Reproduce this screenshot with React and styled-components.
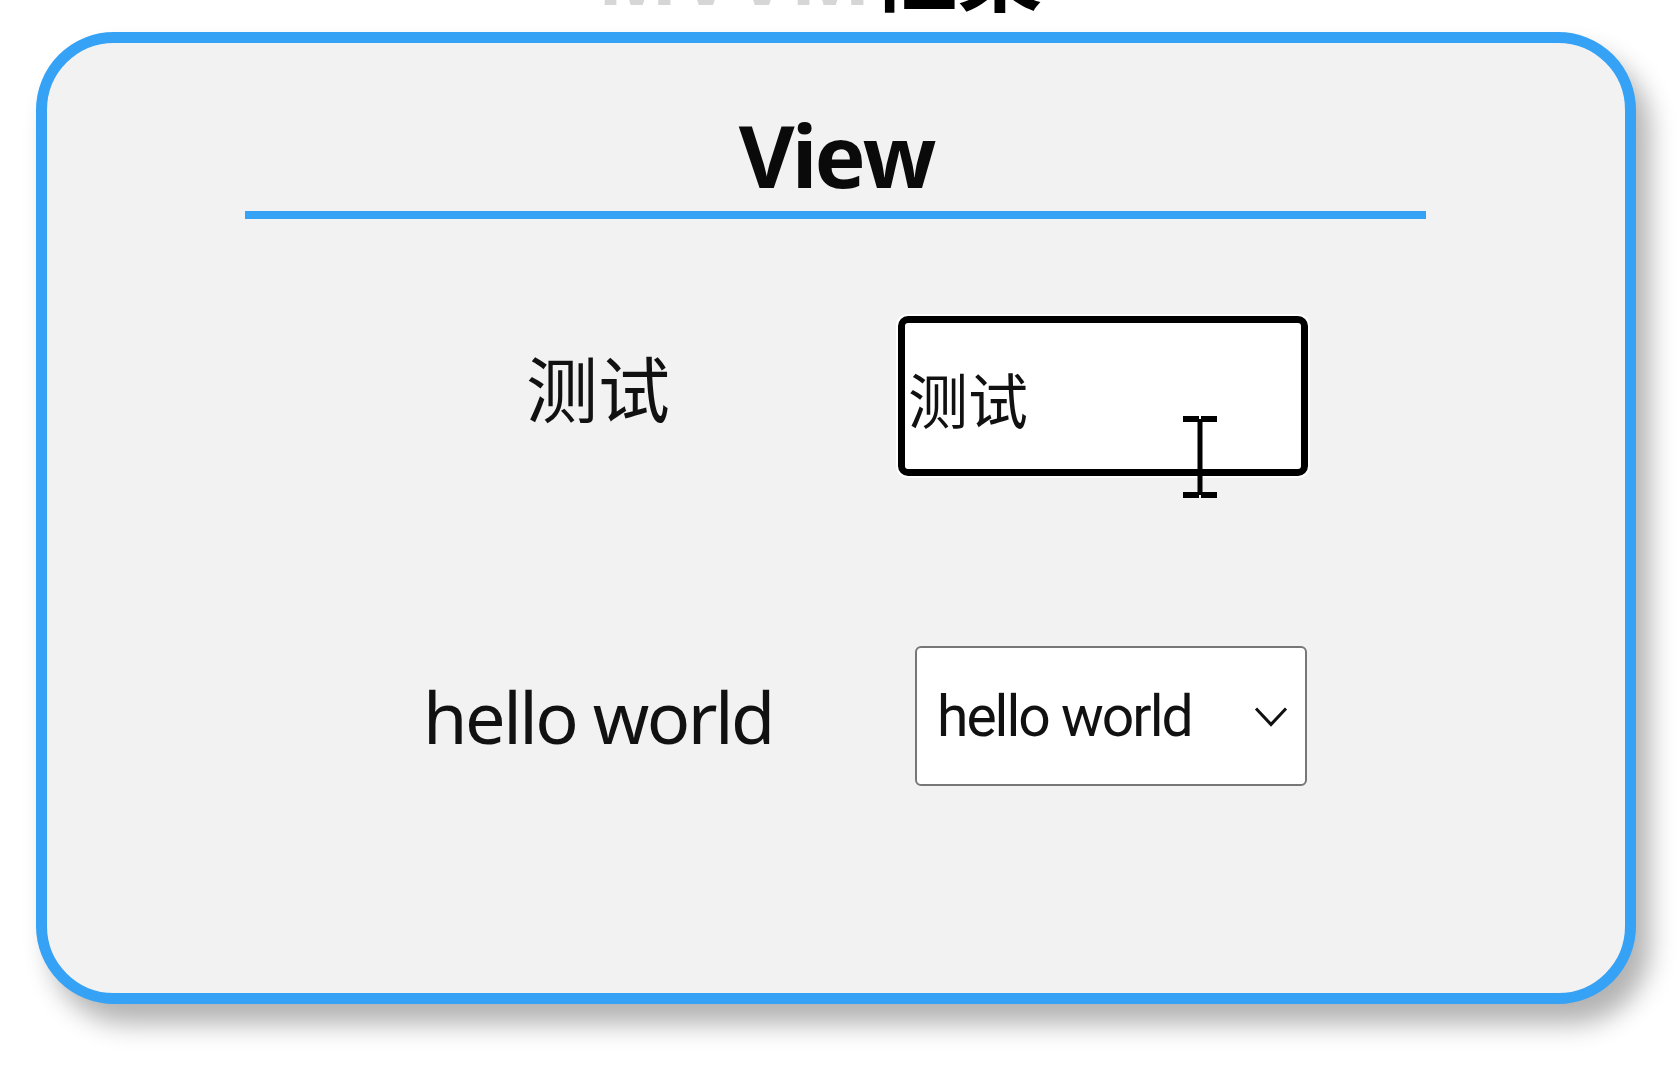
import styled, { createGlobalStyle } from "styled-components";

const GlobalStyle = createGlobalStyle`
  html, body {
    margin: 0;
    padding: 0;
    background: #ffffff;
  }
  body {
    font-family: "Noto Sans", "Noto Sans CJK SC", sans-serif;
    color: #111;
  }
  * {
    box-sizing: border-box;
  }
`;

export default function App() {
  return (
    <>
      <GlobalStyle />
      <Page>
        <TopBar>
          <PageTitle>
            <Faded>MVVM</Faded>框架
          </PageTitle>
        </TopBar>
        <Card>
          <Heading>View</Heading>
          <Divider />
          <Form>
            <Label $lift={14}>测试</Label>
            <Field>
              <TextInput defaultValue="测试" />
              <IBeam viewBox="0 0 36 82">
                <rect x="1" y="0" width="16" height="6" />
                <rect x="19" y="0" width="16" height="6" />
                <rect x="15.5" y="3" width="5" height="76" />
                <rect x="1" y="76" width="16" height="6" />
                <rect x="19" y="76" width="16" height="6" />
              </IBeam>
            </Field>
            <Label $tight>hello world</Label>
            <Field>
              <Select defaultValue="hello world">
                <option>hello world</option>
              </Select>
              <Chevron viewBox="0 0 34 22">
                <polyline points="2,3 17,19 32,3" />
              </Chevron>
            </Field>
          </Form>
        </Card>
      </Page>
    </>
  );
}

const Page = styled.div`
  width: 1680px;
  height: 1080px;
  padding-left: 36px;
  overflow: hidden;
`;

const TopBar = styled.div`
  width: 1600px;
  height: 32px;
  display: flex;
  justify-content: center;
  align-items: flex-end;
  padding-right: 32px;
  overflow: hidden;
`;

const PageTitle = styled.h1`
  margin: 0 0 17px;
  font-family: "Noto Sans", "Noto Sans CJK SC", sans-serif;
  font-size: 86px;
  font-weight: 700;
  line-height: 1;
  color: #000;
  white-space: nowrap;
`;

const Faded = styled.span`
  color: #d6d6d6;
`;

const Card = styled.section`
  width: 1600px;
  height: 972px;
  padding-top: 60px;
  border: 11px solid #35a2f6;
  border-radius: 78px;
  background: #f2f2f3;
  box-shadow: 14px 20px 26px rgba(0, 0, 0, 0.3);
  display: flex;
  flex-direction: column;
  align-items: center;
`;

const Heading = styled.h2`
  margin: 0;
  font-family: "Open Sans", "Noto Sans", sans-serif;
  font-size: 86px;
  font-weight: 700;
  letter-spacing: -3px;
  line-height: 1.2;
  color: #0a0a0a;
`;

const Divider = styled.div`
  width: 1181px;
  height: 8px;
  margin-top: 5px;
  margin-left: -2px;
  background: #35a2f6;
`;

const Form = styled.div`
  align-self: flex-start;
  margin: 97px 0 0 351px;
  display: grid;
  grid-template-columns: 400px 510px;
  grid-auto-rows: 160px;
  row-gap: 160px;
  align-items: center;
`;

const Label = styled.span`
  justify-self: center;
  margin-bottom: ${(p) => p.$lift || 0}px;
  font-family: "Noto Sans", "Noto Sans CJK SC", sans-serif;
  font-size: 72px;
  letter-spacing: ${(p) => (p.$tight ? "-2.5px" : "0")};
  line-height: 1;
  color: #111;
  white-space: nowrap;
`;

const Field = styled.div`
  position: relative;
  justify-self: end;
  display: flex;
  align-items: center;
`;

const TextInput = styled.input`
  width: 410px;
  height: 160px;
  padding: 2px 0 0 3px;
  border: 7px solid #000;
  border-radius: 10px;
  background: #fff;
  box-shadow: 0 0 0 2px #fff;
  font-family: "Noto Sans CJK SC", sans-serif;
  font-size: 60px;
  color: #111;
  outline: none;
`;

const IBeam = styled.svg`
  position: absolute;
  left: 284px;
  top: 100px;
  width: 36px;
  height: 82px;
  fill: #000;
`;

const Select = styled.select`
  width: 392px;
  height: 140px;
  margin-right: 1px;
  padding: 0 0 0 20px;
  border: 2px solid #777;
  border-radius: 6px;
  background: #fff;
  appearance: none;
  font-family: Roboto, "Noto Sans", sans-serif;
  font-size: 57px;
  letter-spacing: -2px;
  color: #111;
  outline: none;
`;

const Chevron = styled.svg`
  position: absolute;
  right: 20px;
  top: 59px;
  width: 34px;
  height: 23px;
  fill: none;
  stroke: #111;
  stroke-width: 3;
  pointer-events: none;
`;
